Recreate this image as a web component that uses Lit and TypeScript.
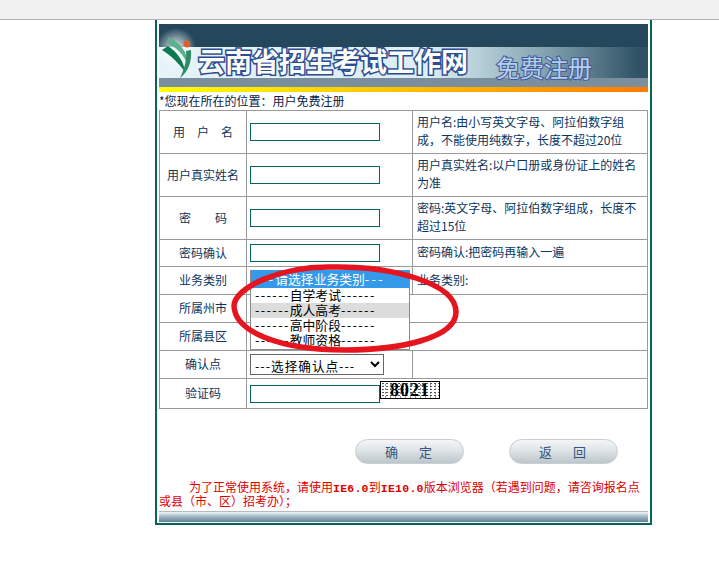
import { LitElement, css, html, nothing } from 'lit';
import { customElement } from 'lit/decorators.js';

const rows = [
  { label: '用　户　名', h: 43, hint: '用户名:由小写英文字母、阿拉伯数字组成，不能使用纯数字，长度不超过20位', kind: 'input' },
  { label: '用户真实姓名', h: 43, hint: '用户真实姓名:以户口册或身份证上的姓名为准', kind: 'input' },
  { label: '密　　码', h: 43, hint: '密码:英文字母、阿拉伯数字组成，长度不超过15位', kind: 'input' },
  { label: '密码确认', h: 27, hint: '密码确认:把密码再输入一遍', kind: 'input' },
  { label: '业务类别', h: 28, hint: '业务类别:', kind: 'menu' },
  { label: '所属州市', h: 28, hint: '', kind: 'wide' },
  { label: '所属县区', h: 28, hint: '', kind: 'wide' },
  { label: '确认点', h: 28, hint: '', kind: 'select' },
  { label: '验证码', h: 30, hint: '', kind: 'captcha' },
];

const options = ['自学考试', '成人高考', '高中阶段', '教师资格'];

@customElement('app-root')
export class AppRoot extends LitElement {
  static override styles = css`
    :host {
      display: block;
      position: relative;
      height: 570px;
      background: #fff;
      font-family: 'Noto Sans CJK SC', sans-serif;
      font-size: 12px;
      color: #0a3560;
      overflow: hidden;
    }
    .topbar {
      height: 19px;
      background: #f0f0f0;
      border-bottom: 1px solid #b4b4b4;
    }
    .panel {
      box-sizing: border-box;
      width: 497px;
      margin-left: 155px;
      padding: 4px 2px 0;
      border: solid #05655c;
      border-width: 0 2px 2px;
    }
    .banner {
      position: relative;
      height: 68px;
      display: flex;
      flex-direction: column;
    }
    .b-dark {
      height: 23px;
      background: #24475c;
    }
    .b-mid {
      height: 31px;
      background: linear-gradient(90deg, #e6f3f9 0, #dcedf5 55%, #b4cdd6 66%, #7f9fac 80%, #2f5266 98%);
    }
    .b-gray {
      height: 9px;
      background: #7b8e9d;
    }
    .b-orange {
      height: 5px;
      background: linear-gradient(90deg, #ffff00 0, #ffc800 45%, #ff7a00 100%);
    }
    .logo {
      position: absolute;
      left: 0;
      top: 0;
    }
    .site {
      position: absolute;
      left: 39px;
      top: 21px;
      font-size: 27px;
      line-height: 32px;
      font-weight: 700;
      white-space: nowrap;
      color: #fbfdf6;
      -webkit-text-stroke: 3px #2c4c92;
      paint-order: stroke fill;
    }
    .sub {
      position: absolute;
      left: 337px;
      top: 28px;
      font-size: 24px;
      line-height: 30px;
      white-space: nowrap;
      color: #b7cfe6;
      -webkit-text-stroke: 2px #3d5a9c;
      paint-order: stroke fill;
    }
    .crumb {
      height: 18px;
      line-height: 18px;
      color: #06224a;
      white-space: nowrap;
    }
    table {
      width: 489px;
      table-layout: fixed;
      border-collapse: collapse;
    }
    td {
      border: 1px solid #9a9a9a;
      padding: 0;
    }
    .c1 {
      width: 86px;
      text-align: center;
      padding-bottom: 2px;
    }
    .c2 {
      width: 162px;
      padding-left: 3px;
      position: relative;
    }
    .hint {
      padding: 0 3px 2px 4px;
      line-height: 18px;
    }
    input {
      display: block;
      box-sizing: border-box;
      width: 130px;
      height: 18px;
      margin: 0;
      padding: 0 2px;
      border: 1px solid #05655c;
      background: #fff;
    }
    select {
      display: block;
      box-sizing: border-box;
      width: 134px;
      height: 21px;
      font: 12.6px 'Noto Sans CJK SC', sans-serif;
      letter-spacing: 1px;
      color: #000;
      background: #fff;
      border: 1px solid #666;
      border-radius: 0;
      padding: 0;
    }
    .menu {
      position: absolute;
      left: 3px;
      top: 3px;
      box-sizing: border-box;
      width: 160px;
      height: 80px;
      background: #fff;
      color: #000;
      border: 1px solid #8a8a8a;
      border-top: 0;
      font-size: 12.8px;
      z-index: 1;
      white-space: nowrap;
    }
    .opt {
      height: 15px;
      line-height: 14px;
      padding-left: 4px;
    }
    .opt.first {
      height: 18px;
      line-height: 18px;
      background: #3399e8;
      color: #fff;
    }
    .opt.hover {
      background: #dcdcdc;
    }
    .dash {
      letter-spacing: 1.35px;
    }
    .first .dash {
      letter-spacing: 2.3px;
    }
    .captcha-row {
      display: flex;
      align-items: flex-start;
      margin-bottom: 4px;
    }
    .captcha-row input {
      margin-top: 4px;
      flex: none;
    }
    .captcha {
      flex: none;
      box-sizing: border-box;
      width: 60px;
      height: 18px;
      border: 1px solid #000;
      font: 700 18px/16px 'Liberation Serif', serif;
      letter-spacing: 1px;
      text-align: center;
      color: #000;
      background-color: #fff;
      background-image: radial-gradient(#555 0.6px, transparent 0.8px), radial-gradient(#888 0.6px, transparent 0.8px);
      background-size: 4px 3px, 5px 4px;
      background-position: 0 0, 2px 1px;
    }
    .actions {
      display: flex;
      margin-top: 30px;
      padding-left: 196px;
      gap: 45px;
    }
    button {
      display: flex;
      justify-content: center;
      align-items: center;
      gap: 21px;
      box-sizing: border-box;
      width: 109px;
      height: 25px;
      padding: 0 2px 0 0;
      font: 13px 'Noto Sans CJK SC', sans-serif;
      color: #34557c;
      background: linear-gradient(#f4f6f7 0, #dfe4e7 45%, #bcc5cb 100%);
      border: 1px solid #c8ced2;
      border-radius: 13px;
    }
    .notice {
      margin-top: 16px;
      height: 30px;
      line-height: 14px;
      color: #e00000;
      text-indent: 30px;
    }
    .notice b {
      font-family: 'Liberation Mono', monospace;
      font-size: 11.5px;
      line-height: 0;
      letter-spacing: 0.25px;
    }
    .rule {
      height: 1px;
      margin-top: 1px;
      background: #b9b9b9;
    }
    .bar {
      height: 10px;
      background: linear-gradient(#f2f6f8 0, #a9bfcc 40%, #5f7f98 100%);
      margin-bottom: 1px;
    }
    .ring {
      position: absolute;
      left: 225px;
      top: 258px;
      pointer-events: none;
      z-index: 2;
    }
  `;

  private renderControl(kind: string) {
    if (kind === 'input') return html`<input type="text" />`;
    if (kind === 'select') {
      return html`<select><option>---选择确认点---</option></select>`;
    }
    if (kind === 'captcha') {
      return html`<div class="captcha-row"><input type="text" /><div class="captcha">8021</div></div>`;
    }
    if (kind === 'menu') {
      return html`
        <div class="menu">
          <div class="opt first"><span class="dash">---</span>请选择业务类别<span class="dash">---</span></div>
          ${options.map(
            (o, i) => html`
              <div class="opt ${i === 1 ? 'hover' : ''}">
                <span class="dash">------</span>${o}<span class="dash">------</span>
              </div>
            `,
          )}
        </div>
      `;
    }
    return nothing;
  }

  override render() {
    return html`
      <div class="topbar"></div>
      <div class="panel">
        <div class="banner">
          <div class="b-dark"></div>
          <div class="b-mid"></div>
          <div class="b-gray"></div>
          <div class="b-orange"></div>
          <svg class="logo" width="50" height="63" viewBox="159 24 50 63">
            <defs>
              <radialGradient id="glow">
                <stop offset="0" stop-color="#fff" stop-opacity=".9" />
                <stop offset="1" stop-color="#fff" stop-opacity="0" />
              </radialGradient>
            </defs>
            <circle cx="176" cy="48" r="20" fill="url(#glow)" />
            <path d="M168 37C179 42 188 51 188 65C184 55 176 47 169 45Z" fill="#5cb08e" />
            <path d="M162 50L168 46C177 52 184 61 185 72C179 63 170 55 162 50Z" fill="#0d7a52" />
            <path d="M191 50C192 62 188 72 180 78C184 70 187 60 186 51Z" fill="#2c8c64" />
            <circle cx="187" cy="44" r="3.4" fill="#e0602c" />
          </svg>
          <div class="site">云南省招生考试工作网</div>
          <div class="sub">免费注册</div>
        </div>
        <div class="crumb">*您现在所在的位置：用户免费注册</div>
        <table>
          ${rows.map((r) => {
            const wide = r.kind === 'wide' || r.kind === 'captcha';
            return html`
              <tr style="height:${r.h}px">
                <td class="c1">${r.label}</td>
                <td class="c2" colspan=${wide ? 2 : 1}>${this.renderControl(r.kind)}</td>
                ${wide ? nothing : html`<td class="hint">${r.hint}</td>`}
              </tr>
            `;
          })}
        </table>
        <div class="actions">
          <button><span>确</span><span>定</span></button>
          <button><span>返</span><span>回</span></button>
        </div>
        <div class="notice">
          为了正常使用系统，请使用<b>IE6.0</b>到<b>IE10.0</b>版本浏览器（若遇到问题，请咨询报名点或县（市、区）招考办）；
        </div>
        <div class="rule"></div>
        <div class="bar"></div>
      </div>
      <svg class="ring" width="240" height="105" viewBox="225 258 240 105">
        <path
          d="M332 267C392 266 456 283 456 312C456 338 400 350 345 350C280 350 235 332 234 306C234 288 280 266 332 267Z"
          fill="none"
          stroke="#e6141e"
          stroke-width="5.5"
        />
      </svg>
    `;
  }
}
